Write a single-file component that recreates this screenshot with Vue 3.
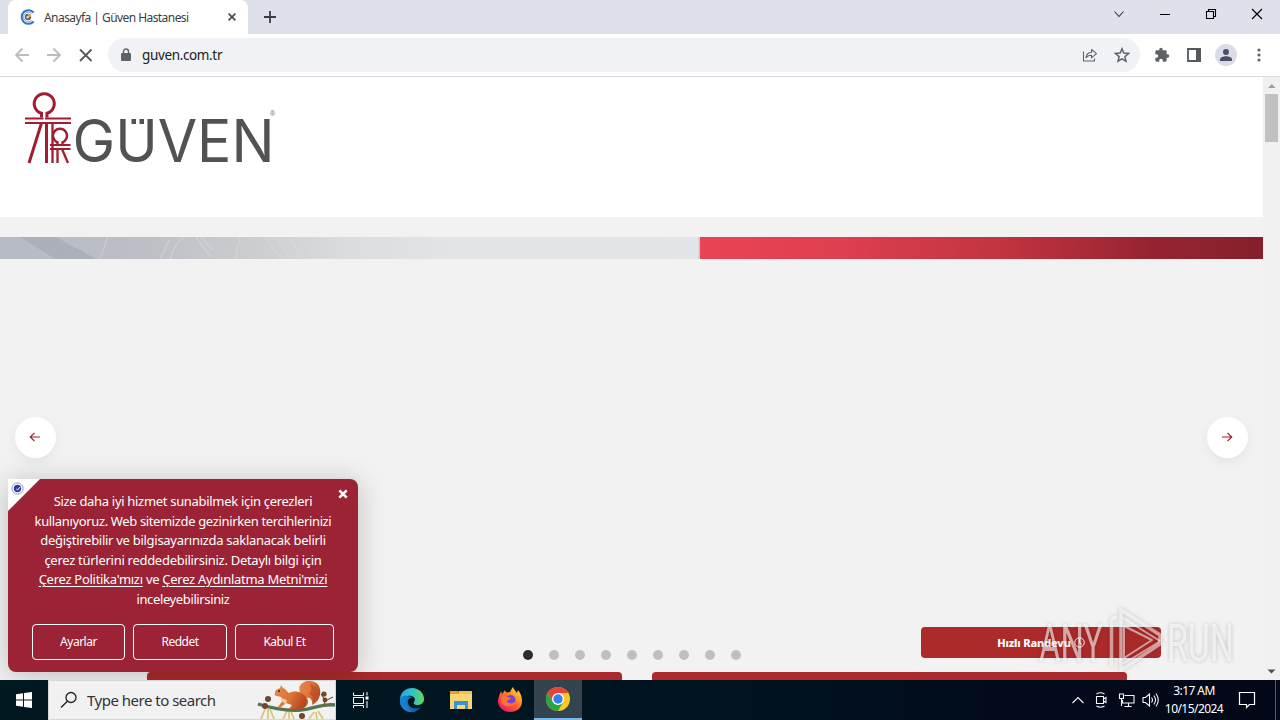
<script setup>
const dots = Array.from({ length: 9 }, (_, i) => i)
const cookieLines = [
  'Size daha iyi hizmet sunabilmek için çerezleri',
  'kullanıyoruz. Web sitemizde gezinirken tercihlerinizi',
  'değiştirebilir ve bilgisayarınızda saklanacak belirli',
  'çerez türlerini reddedebilirsiniz. Detaylı bilgi için',
]
</script>

<template>
  <div class="screen">
    <header class="tabstrip">
      <div class="tab">
        <svg class="favicon" width="16" height="16" viewBox="0 0 16 16">
          <path d="M13.6 3.5A6.8 6.8 0 1 0 13.6 12.5" fill="none" stroke="#2f74c8" stroke-width="2" />
          <path d="M11.8 4.6A4.8 4.8 0 1 0 11.8 11.4" fill="none" stroke="#78a8dc" stroke-width="1" />
          <circle cx="8" cy="8" r="3.2" fill="#665e58" />
          <path d="M8 8V4.8A3.2 3.2 0 0 1 11.2 8z" fill="#c9a36b" />
          <circle cx="7.6" cy="8.2" r="1.2" fill="#d7dbe0" />
        </svg>
        <span class="tab-title">Anasayfa | Güven Hastanesi</span>
        <svg class="tab-close" width="8" height="8" viewBox="0 0 8 8"><path d="M.6.6l6.8 6.8M7.4.6L.6 7.4" stroke="#45484c" stroke-width="1.6" /></svg>
      </div>
      <svg class="plus" width="12" height="12" viewBox="0 0 12 12"><path d="M6 0v12M0 6h12" stroke="#3a3d41" stroke-width="1.8" /></svg>
      <div class="winbtns">
        <svg width="46" height="28" viewBox="0 0 46 28"><path d="M18.500 11.500l4.500 5 4.500-5" fill="none" stroke="#333" stroke-width="1.1" /></svg>
        <svg width="46" height="28" viewBox="0 0 46 28"><path d="M18 14.500h10" stroke="#000" /></svg>
        <svg width="46" height="28" viewBox="0 0 46 28"><path d="M18.500 11.500h7v7h-7zM20.500 11.500v-2h7v7h-2" fill="none" stroke="#000" stroke-width="1.1" /></svg>
        <svg width="46" height="28" viewBox="0 0 46 28"><path d="M18 9l10 10M28 9L18 19" stroke="#000" stroke-width="1.2" /></svg>
      </div>
    </header>

    <div class="toolbar">
      <svg width="32" height="32" viewBox="0 0 32 32"><path d="M29 16H16M22.500 9.500L16 16l6.500 6.500" fill="none" stroke="#babcbe" stroke-width="1.8" /></svg>
      <svg width="32" height="32" viewBox="0 0 32 32"><path d="M15 16h13M21.500 9.500L28 16l-6.500 6.500" fill="none" stroke="#babcbe" stroke-width="1.8" /></svg>
      <svg width="32" height="32" viewBox="0 0 32 32"><path d="M16 10.500l11.500 11.500M27.500 10.500L16 22" stroke="#55585c" stroke-width="1.8" /></svg>
      <div class="omnibox">
        <svg width="10" height="14" viewBox="0 0 10 14"><rect y="5" width="10" height="8" rx="1" fill="#5f6368" /><path d="M2.500 5.500V3.500a2.500 2.500 0 0 1 5 0v2" fill="none" stroke="#5f6368" stroke-width="1.400" /></svg>
        <span class="url">guven.com.tr</span>
        <svg class="share" width="16" height="16" viewBox="0 0 16 16"><path d="M1.500 4.500v9.500h11v-2.500M4 10.500c.5-3.500 2.500-5 5.500-5V2.500l5 4.200-5 4.200V8.200C7 8.200 5.500 9 4 10.500z" fill="none" stroke="#5f6368" stroke-width="1.100" stroke-linejoin="round" /></svg>
        <svg width="16" height="16" viewBox="0 0 16 16"><path d="M8 1.800l1.800 4.300 4.700.4-3.600 3.100 1.100 4.600L8 11.800l-4 2.400 1.100-4.600L1.500 6.500l4.700-.4z" fill="none" stroke="#5f6368" stroke-width="1.500" /></svg>
      </div>
      <div class="tools">
        <svg width="16" height="16" viewBox="0 0 24 24"><path fill="#5f6368" d="M20.500 11H19V7c0-1.100-.9-2-2-2h-4V3.500a2.500 2.500 0 0 0-5 0V5H4a2 2 0 0 0-2 2v3.800h1.500a2.700 2.700 0 0 1 0 5.400H2V20c0 1.100.9 2 2 2h3.800v-1.500a2.700 2.700 0 0 1 5.400 0V22H17a2 2 0 0 0 2-2v-4h1.500a2.500 2.500 0 0 0 0-5z" /></svg>
        <svg class="side" width="14" height="14" viewBox="0 0 14 14"><path d="M1 1h12v12H1z" fill="none" stroke="#55595e" stroke-width="1.800" /><path d="M9 0h5v14H9z" fill="#55595e" /></svg>
        <svg class="avatar" width="22" height="22" viewBox="0 0 22 22"><circle cx="11" cy="11" r="11" fill="#dadde7" /><circle cx="11" cy="8" r="3" fill="#4a4e68" /><path d="M5 17v-1.500c0-2.200 3.500-3.300 6-3.300s6 1.100 6 3.300V17z" fill="#4a4e68" /></svg>
        <svg class="kebab" width="4" height="14" viewBox="0 0 4 14" fill="#5f6368"><circle cx="2" cy="2" r="1.600" /><circle cx="2" cy="7" r="1.600" /><circle cx="2" cy="12" r="1.600" /></svg>
      </div>
    </div>

    <div class="viewport">
      <main class="site">
        <div class="site-head">
          <svg class="logo" width="254" height="80" viewBox="0 0 254 80">
            <defs><clipPath id="capBand"><path d="M48 26h200v46H48z" /></clipPath></defs>
            <g fill="none" stroke="#a21d31" stroke-width="3">
              <path d="M17.500 25.500v-4.200a10 10 0 1 1 5.500 0v4.200" />
              <path d="M1 26.500h18.500M21 26.500h26M1 31h46" stroke-width="2.200" />
              <path d="M17.500 31L5 71M22.500 31v40" />
              <path d="M33.500 53.500v-3.200a7 7 0 1 1 5 0v3.200" stroke-width="2.400" />
              <path d="M26 53h20.500M26 57h20.500" stroke-width="1.800" />
              <path d="M28.500 32v39M33.500 57v14M38 57l6 14" stroke-width="2.300" />
            </g>
            <g clip-path="url(#capBand)">
              <text x="48.500" y="69.600" textLength="202" lengthAdjust="spacingAndGlyphs" class="logo-word">GÜVEN</text>
            </g>
            <path d="M107.500 27h4.500v5h-4.500zM115.500 27h4.500v5h-4.500z" fill="#515254" />
            <text x="246" y="24" class="logo-reg">®</text>
          </svg>
        </div>
        <div class="banner">
          <svg class="banner-photo" width="700" height="22" viewBox="0 0 700 22" preserveAspectRatio="none">
            <defs>
              <linearGradient id="steel"><stop offset="0" stop-color="#b5bac4" /><stop offset=".22" stop-color="#bdc0c5" /><stop offset=".36" stop-color="#cbcdd0" /><stop offset=".52" stop-color="#dcdee1" /><stop offset=".65" stop-color="#e2e5e8" /><stop offset="1" stop-color="#e2e6e9" /></linearGradient>
            </defs>
            <path d="M0 0h700v22H0z" fill="url(#steel)" />
            <path d="M20 0h36l40 22H55z" fill="#a4a9b2" opacity=".65" />
            <path d="M170 22q5-16 14-22M196 0l15 20M201 0l13 14M240 0l-5 22M265 0l16 22M276 0l15 22M288 0l16 22M300 0l16 22M311 0l14 20M108 0l-8 22M160 22l10-20M330 3l8 18" stroke="#dadde1" stroke-width="2" opacity=".4" fill="none" />
            <path d="M698.500 0h1.500v22h-1.500z" fill="#c8cbc9" />
          </svg>
          <div class="banner-red"></div>
        </div>

        <button class="nav prev"><svg width="12" height="12" viewBox="0 0 12 12"><path d="M11 6H1.500M5.500 1.800L1.300 6l4.200 4.200" /></svg></button>
        <button class="nav next"><svg width="12" height="12" viewBox="0 0 12 12"><path d="M1 6h9.500M6.500 1.800L10.700 6l-4.200 4.200" /></svg></button>
        <div class="dots"><i v-for="d in dots" :key="d" :class="{ on: d === 0 }"></i></div>
        <div class="quick">
          <span>Hızlı Randevu</span>
          <svg width="11" height="11" viewBox="0 0 11 11"><circle cx="5.500" cy="5.500" r="4.700" /><path d="M5.500 2v3.700l2.400 1.700" /></svg>
        </div>
        <div class="cards"><div></div><div></div></div>

        <section class="cookie">
          <div class="corner"><svg width="13" height="13" viewBox="0 0 13 13"><circle cx="6.500" cy="6.500" r="5.600" fill="#fff" stroke="#8a93d6" /><circle cx="6.500" cy="6.500" r="3.700" fill="#2f3c9e" /><path d="M5.300 7l1.200 1 2.700-3" fill="none" stroke="#fff" /></svg></div>
          <svg class="cookie-x" width="10" height="10" viewBox="0 0 10 10"><path d="M1.300 1.300l7.400 7.400M8.700 1.300L1.300 8.700" stroke="#fff" stroke-width="2.600" /></svg>
          <div class="cookie-text">
            <p v-for="(line, i) in cookieLines" :key="line" :class="'l' + i">{{ line }}</p>
            <p class="l4"><u>Çerez Politika'mızı</u> ve <u>Çerez Aydınlatma Metni'mizi</u></p>
            <p class="l5">inceleyebilirsiniz</p>
          </div>
          <div class="cookie-actions"><button>Ayarlar</button><button>Reddet</button><button>Kabul Et</button></div>
        </section>
      </main>

      <div class="scrollbar">
        <svg width="17" height="17" viewBox="0 0 17 17"><path d="M5 11l3.800-4 3.800 4z" fill="#a0a0a0" /></svg>
        <div class="thumb"></div>
        <svg class="down" width="17" height="17" viewBox="0 0 17 17"><path d="M4.500 6.500h8l-4 4z" fill="#505050" /></svg>
      </div>

      <svg class="watermark" width="204" height="66" viewBox="0 0 204 66">
        <g class="wm-text">
          <text x="3" y="54" textLength="64" lengthAdjust="spacingAndGlyphs">ANY</text>
          <text x="131" y="54" textLength="67" lengthAdjust="spacingAndGlyphs">RUN</text>
        </g>
        <g fill="none" stroke="#fff" stroke-opacity=".55" stroke-width="3.500" stroke-linejoin="round">
          <path d="M75.500 59V16q0-6 5-5.500M85 3l39 25v9L85 63z" />
          <path d="M88 19v32l28-18zM87 11l37 23M87 57l36-22" stroke-width="2" />
        </g>
      </svg>
    </div>

    <footer class="taskbar">
      <div class="start"><svg width="16" height="16" viewBox="0 0 16 16" fill="#fff"><path d="M0 2.200l7-1v6.300H0zM8 1l8-1v7.500H8zM0 8.500h7v6.300l-7-1zM8 8.500h8V16l-8-1z" /></svg></div>
      <div class="search">
        <svg width="18" height="18" viewBox="0 0 18 18"><circle cx="11" cy="6.500" r="5" fill="none" stroke="#222" stroke-width="1.300" /><path d="M7.400 10.200L1 16.500" stroke="#222" stroke-width="1.400" /></svg>
        <span>Type here to search</span>
        <svg class="squirrel" width="78" height="38" viewBox="0 0 78 38">
          <defs><linearGradient id="fur" x2="1" y2=".4"><stop stop-color="#e58a4c" /><stop offset=".6" stop-color="#dc7436" /><stop offset="1" stop-color="#b84a21" /></linearGradient></defs>
          <path d="M8 28l-4 10M11 28v10M13 28l4 10M30 30l-4 8M32 30v8M34 30l3 8M57 31l-5 7M59 31l1 7M61 30l5 8" stroke="#d8c272" stroke-width="1.600" />
          <path d="M1 23c16 5 30 7 43 6s22-7 34-5" stroke="#54754e" stroke-width="3.400" fill="none" />
          <path d="M45 24c5-5 1-9-2-13C40 4 47-1 54 0c9 1 11 10 8 17-2 4-5 6-7 7 1-5-2-8-5-7 3 5 0 9-5 10z" fill="url(#fur)" />
          <path d="M53 3c7 1 9 9 6 14-1 2-2 3-3 4 1-6-2-7-4-8 3-3 3-6 1-10z" fill="#b94d22" opacity=".65" />
          <path d="M18 12c0-3 3-4 5-5l1-3 2 3c3 1 4 4 6 5 9-4 18 1 18 9 0 4-3 7-6 7H32l3-4-6-2-6 5-2-1 5-7-2-3-4-1c-2 0-3-1-2-3z" fill="url(#fur)" />
          <path d="M24 17c0 3 2 5 5 6l1-4z" fill="#f4c79d" />
          <circle cx="22" cy="10" r="1" fill="#31221b" />
          <path d="M67 26l1-7-4-6M70 19l6-3" stroke="#75613b" stroke-width="1.200" fill="none" />
          <g fill="#70452d"><circle cx="11" cy="18" r="3" /><circle cx="8" cy="25" r="3" /><circle cx="67" cy="13" r="2.600" /><circle cx="68" cy="19" r="2.400" /><circle cx="45" cy="35" r="3" /></g>
        </svg>
      </div>
      <div class="task"><svg width="17" height="17" viewBox="0 0 17 17" fill="none" stroke="#fff" stroke-width="1"><path d="M1.500.500V3.500h10V.500M1.500 16v-2.500h10v2.500M1.500 5.500h10v6h-10zM15 0v3.500M15 9v7" /><path d="M13.500 4.500h3v3h-3z" fill="#fff" stroke="none" /></svg></div>
      <div class="app"><svg width="26" height="26" viewBox="0 0 26 26">
        <defs><linearGradient id="edgeTop"><stop stop-color="#2aa4df" /><stop offset=".5" stop-color="#2fc1cb" /><stop offset="1" stop-color="#66d85b" /></linearGradient><linearGradient id="edgeLow"><stop stop-color="#1787d8" /><stop offset="1" stop-color="#0b4c9c" /></linearGradient></defs>
        <path d="M1 13C1 5 7 1 13 1c7 0 12 5 12 11 0 4-3 6-7 6-3 0-4-1-3-3 3-4-2-7-6-6-4 0-8 3-8 7z" fill="url(#edgeTop)" />
        <path d="M1 14c0-4 4-6 8-5 2 0 4 1 5 2-3-1-6 2-5 5 1 5 7 7 13 4-3 4-7 6-11 5C5 24 1 19 1 14z" fill="url(#edgeLow)" />
        <path d="M9 10c-3 3-3 10 4 15C5 25 1 20 1 14c0-4 4-5 8-4z" fill="#187fd0" />
      </svg></div>
      <div class="app"><svg width="24" height="24" viewBox="0 0 24 24"><path d="M1 3h8l2 2h12v5H1z" fill="#e6a328" /><path d="M1 6h22v15H1z" fill="#f9d674" /><path d="M10 3h13v3H10z" fill="#f8c044" /><path d="M5 21v-8h14v8h-3v-4H8v4z" fill="#3b93d4" /><path d="M9 17h6v2H9z" fill="#f9d674" /></svg></div>
      <div class="app"><svg width="26" height="26" viewBox="0 0 26 26">
        <defs><linearGradient id="fox" x1="1" x2=".2" y2="1"><stop stop-color="#fff044" /><stop offset=".35" stop-color="#ff9d28" /><stop offset=".7" stop-color="#ff4739" /><stop offset="1" stop-color="#e51379" /></linearGradient></defs>
        <path d="M13 5c1-2 2-4 3-5 1 3 3 4 4 6l1-3c3 4 4 7 4 11 0 7-5 11-12 11S1 20 1 14C1 10 3 7 4 4l1 3 3-4c0 2 2 3 5 2z" fill="url(#fox)" />
        <circle cx="13.500" cy="13" r="5" fill="#7144d8" /><path d="M4 11c2-3 5-2 7-1l3 1c-1 2-3 2-4 3 1 3 5 3 8 1-1 6-12 6-14 0z" fill="#ff7034" />
      </svg></div>
      <div class="app active"><svg width="24" height="24" viewBox="0 0 24 24"><circle cx="12" cy="12" r="12" fill="#fbc926" /><path d="M12 6h10.400a12 12 0 0 0-20.800 0L7 15z" fill="#e54335" /><path d="M1.600 6A12 12 0 0 0 12 24l5.200-9L12 18l-5.200-3z" fill="#2ba24c" /><circle cx="12" cy="12" r="6" fill="#fff" /><circle cx="12" cy="12" r="4.700" fill="#3980ed" /></svg></div>
      <div class="tray">
        <svg width="12" height="8" viewBox="0 0 12 8"><path d="M.500 7L6 1.500 11.500 7" /></svg>
        <svg width="14" height="16" viewBox="0 0 14 16"><path d="M2.500 4.500h7v7h-7zM9.500 7l2.500-1.500v5L9.500 9M2.500 2Q6.500-.5 10.500 2M2.500 14q4 2.500 8 0" /></svg>
        <svg width="17" height="16" viewBox="0 0 17 16"><path d="M6.500 3.500h9.500v7.500H4.500V8M10.500 11v3M6.500 14.500h7M1.500 2h4v4.500h-4zM3.500 6.500v7.500" /></svg>
        <svg width="17" height="16" viewBox="0 0 17 16"><path d="M1 5.500h2.500l4-3.500v12l-4-3.500H1zM9.500 5.500q2 2.500 0 5M11.800 3.500q3.500 4.500 0 9M14 1.500q4.500 6.500 0 13" /></svg>
      </div>
      <div class="clock"><span class="time">3:17 AM</span><span class="date">10/15/2024</span></div>
      <svg class="note" width="18" height="18" viewBox="0 0 18 18"><path d="M1.500 1.500h15v12h-5l-3 3v-3h-7z" fill="none" stroke="#fff" stroke-width="1.200" /></svg>
      <div class="peek"></div>
    </footer>
  </div>
</template>

<style>
body { margin: 0; overflow: hidden; }
</style>

<style scoped>
* { box-sizing: border-box; }
svg { display: block; flex: none; }
.screen { width: 1280px; height: 720px; display: flex; flex-direction: column; overflow: hidden; font-family: "Noto Sans", "Open Sans", sans-serif; }
button { font-family: inherit; padding: 0; }
.tabstrip { height: 34px; flex: none; background: #dee1e9; display: flex; padding-left: 8px; }
.tab { width: 240px; height: 34px; background: #fff; border-radius: 8px 8px 0 0; display: flex; align-items: center; padding-left: 12px; }
.tab-title { margin-left: 8px; width: 184px; font-size: 12px; color: #3c4043; letter-spacing: -.56px; white-space: nowrap; }
.plus { margin: 11px 0 0 16px; }
.winbtns { margin-left: auto; display: flex; }
.toolbar { height: 43px; flex: none; background: #fff; border-bottom: 1px solid #d8dadd; display: flex; align-items: center; }
.toolbar > svg:nth-child(3) { margin-right: 12px; }
.omnibox { width: 1032px; height: 34px; border-radius: 17px; background: #f0f2f5; display: flex; align-items: center; padding: 0 10px 0 13px; }
.url { margin-left: 11px; font-size: 13.500px; color: #202124; letter-spacing: -.36px; }
.share { margin: 0 16px 0 auto; }
.tools { flex: 1; display: flex; align-items: center; padding-left: 14px; }
.side { margin-left: 17px; }
.avatar { margin-left: 14px; }
.kebab { margin-left: 20px; }
.viewport { height: 603px; flex: none; display: flex; position: relative; background: #f2f2f2; overflow: hidden; }
.site { width: 1263px; position: relative; }
.site-head { height: 140px; background: #fff; padding: 15px 0 0 24px; }
.logo-word { font: 400 59px Inter, sans-serif; fill: #515254; }
.logo-reg { font: 7px "Liberation Sans", sans-serif; fill: #666; }
.banner { height: 22px; margin-top: 20px; display: flex; }
.banner-red { flex: 1; background: linear-gradient(90deg, #e94355, #df3f50 25%, #bf333f 55%, #962430 80%, #84202b); }
.nav { position: absolute; top: 340px; width: 41px; height: 41px; border: 0; border-radius: 50%; background: #fff; box-shadow: 0 4px 12px rgba(0, 0, 0, .06); display: flex; align-items: center; justify-content: center; padding: 0 1px 1px 0; }
.nav svg { fill: none; stroke: #9a2131; stroke-width: 1.2; }
.prev { left: 15px; }
.next { left: 1207px; }
.dots { position: absolute; left: 523px; top: 573px; display: flex; gap: 16px; }
.dots i { width: 10px; height: 10px; border-radius: 50%; background: #bfbfbf; }
.dots i.on { background: #2d2d2d; }
.quick { position: absolute; left: 921px; top: 550px; width: 240px; height: 31px; border-radius: 4px; background: #ad2a2b; color: #fff; display: flex; align-items: center; justify-content: center; gap: 3px; font-size: 11px; font-weight: 800; letter-spacing: -.15px; }
.quick svg { fill: none; stroke: #fff; stroke-width: 1; }
.cards { position: absolute; left: 147px; top: 595px; display: flex; gap: 30px; }
.cards div { width: 475px; height: 20px; border-radius: 4px; background: #ab2a2b; }
.cookie { position: absolute; left: 8px; top: 402px; width: 350px; height: 193px; border-radius: 8px; background: #9b2335; color: #fff; box-shadow: 0 3px 28px rgba(0, 0, 0, .22); padding-top: 13px; }
.corner { position: absolute; left: 0; top: 0; width: 32px; height: 32px; background: #fff; clip-path: polygon(0 0, 100% 0, 0 100%); padding: 3px; }
.cookie-x { position: absolute; left: 330px; top: 10px; }
.cookie-text { font-size: 13px; line-height: 19.6px; }
.cookie-text p { margin: 0; text-align: center; white-space: nowrap; letter-spacing: -.28px; }
.cookie-text .l0 { letter-spacing: -.31px; }
.cookie-text .l1 { letter-spacing: -.36px; }
.cookie-text .l5 { letter-spacing: -.38px; }
.cookie-text u { text-underline-offset: 2px; }
.cookie-actions { display: flex; gap: 8px; margin: 14px 24px 0; }
.cookie-actions button { width: 93px; height: 36px; border: 1px solid #fff; border-radius: 4px; background: transparent; color: #fff; font-size: 12px; letter-spacing: -.5px; }
.cookie-actions button:nth-child(2) { width: 94px; }
.cookie-actions button:nth-child(3) { width: 99px; }
.scrollbar { width: 17px; height: 603px; background: #f1f1f1; display: flex; flex-direction: column; }
.thumb { width: 13px; height: 48px; margin-left: 2px; background: #c1c1c1; }
.down { margin-top: auto; }
.watermark { position: absolute; left: 1036px; top: 530px; filter: drop-shadow(0 0 2px rgba(0, 0, 0, .32)); }
.wm-text { font: 400 52px Roboto, sans-serif; fill: #fff; fill-opacity: .6; }
.taskbar { height: 40px; flex: none; background: linear-gradient(90deg, #001820, #001420 55%, #020a1b 80%, #020817); display: flex; align-items: center; color: #fff; }
.start { width: 48px; display: flex; justify-content: center; }
.search { width: 288px; height: 40px; background: #f1f1f1; border: 1px solid #d4d6d7; display: flex; align-items: center; padding-left: 11px; }
.search span { width: 170px; margin-left: 9px; font-size: 15px; color: #333; white-space: nowrap; letter-spacing: -.5px; }
.squirrel { margin-left: auto; }
.task { width: 51px; padding-right: 3px; display: flex; justify-content: center; }
.app { width: 49px; height: 40px; display: flex; align-items: center; justify-content: center; }
.active { width: 48px; background: #34444f; border-bottom: 2px solid #76b9ed; }
.tray { margin-left: auto; display: flex; align-items: center; gap: 10px; }
.tray svg { fill: none; stroke: #f3f5f7; stroke-width: 1.1; }
.tray svg:last-child { margin-left: -3px; }
.clock { width: 70px; display: flex; flex-direction: column; align-items: center; font-size: 12px; line-height: 18px; letter-spacing: -.55px; white-space: nowrap; }
.note { margin-left: 9px; }
.peek { width: 1px; height: 40px; margin: 0 4px 0 19px; background: #59606b; }
</style>
